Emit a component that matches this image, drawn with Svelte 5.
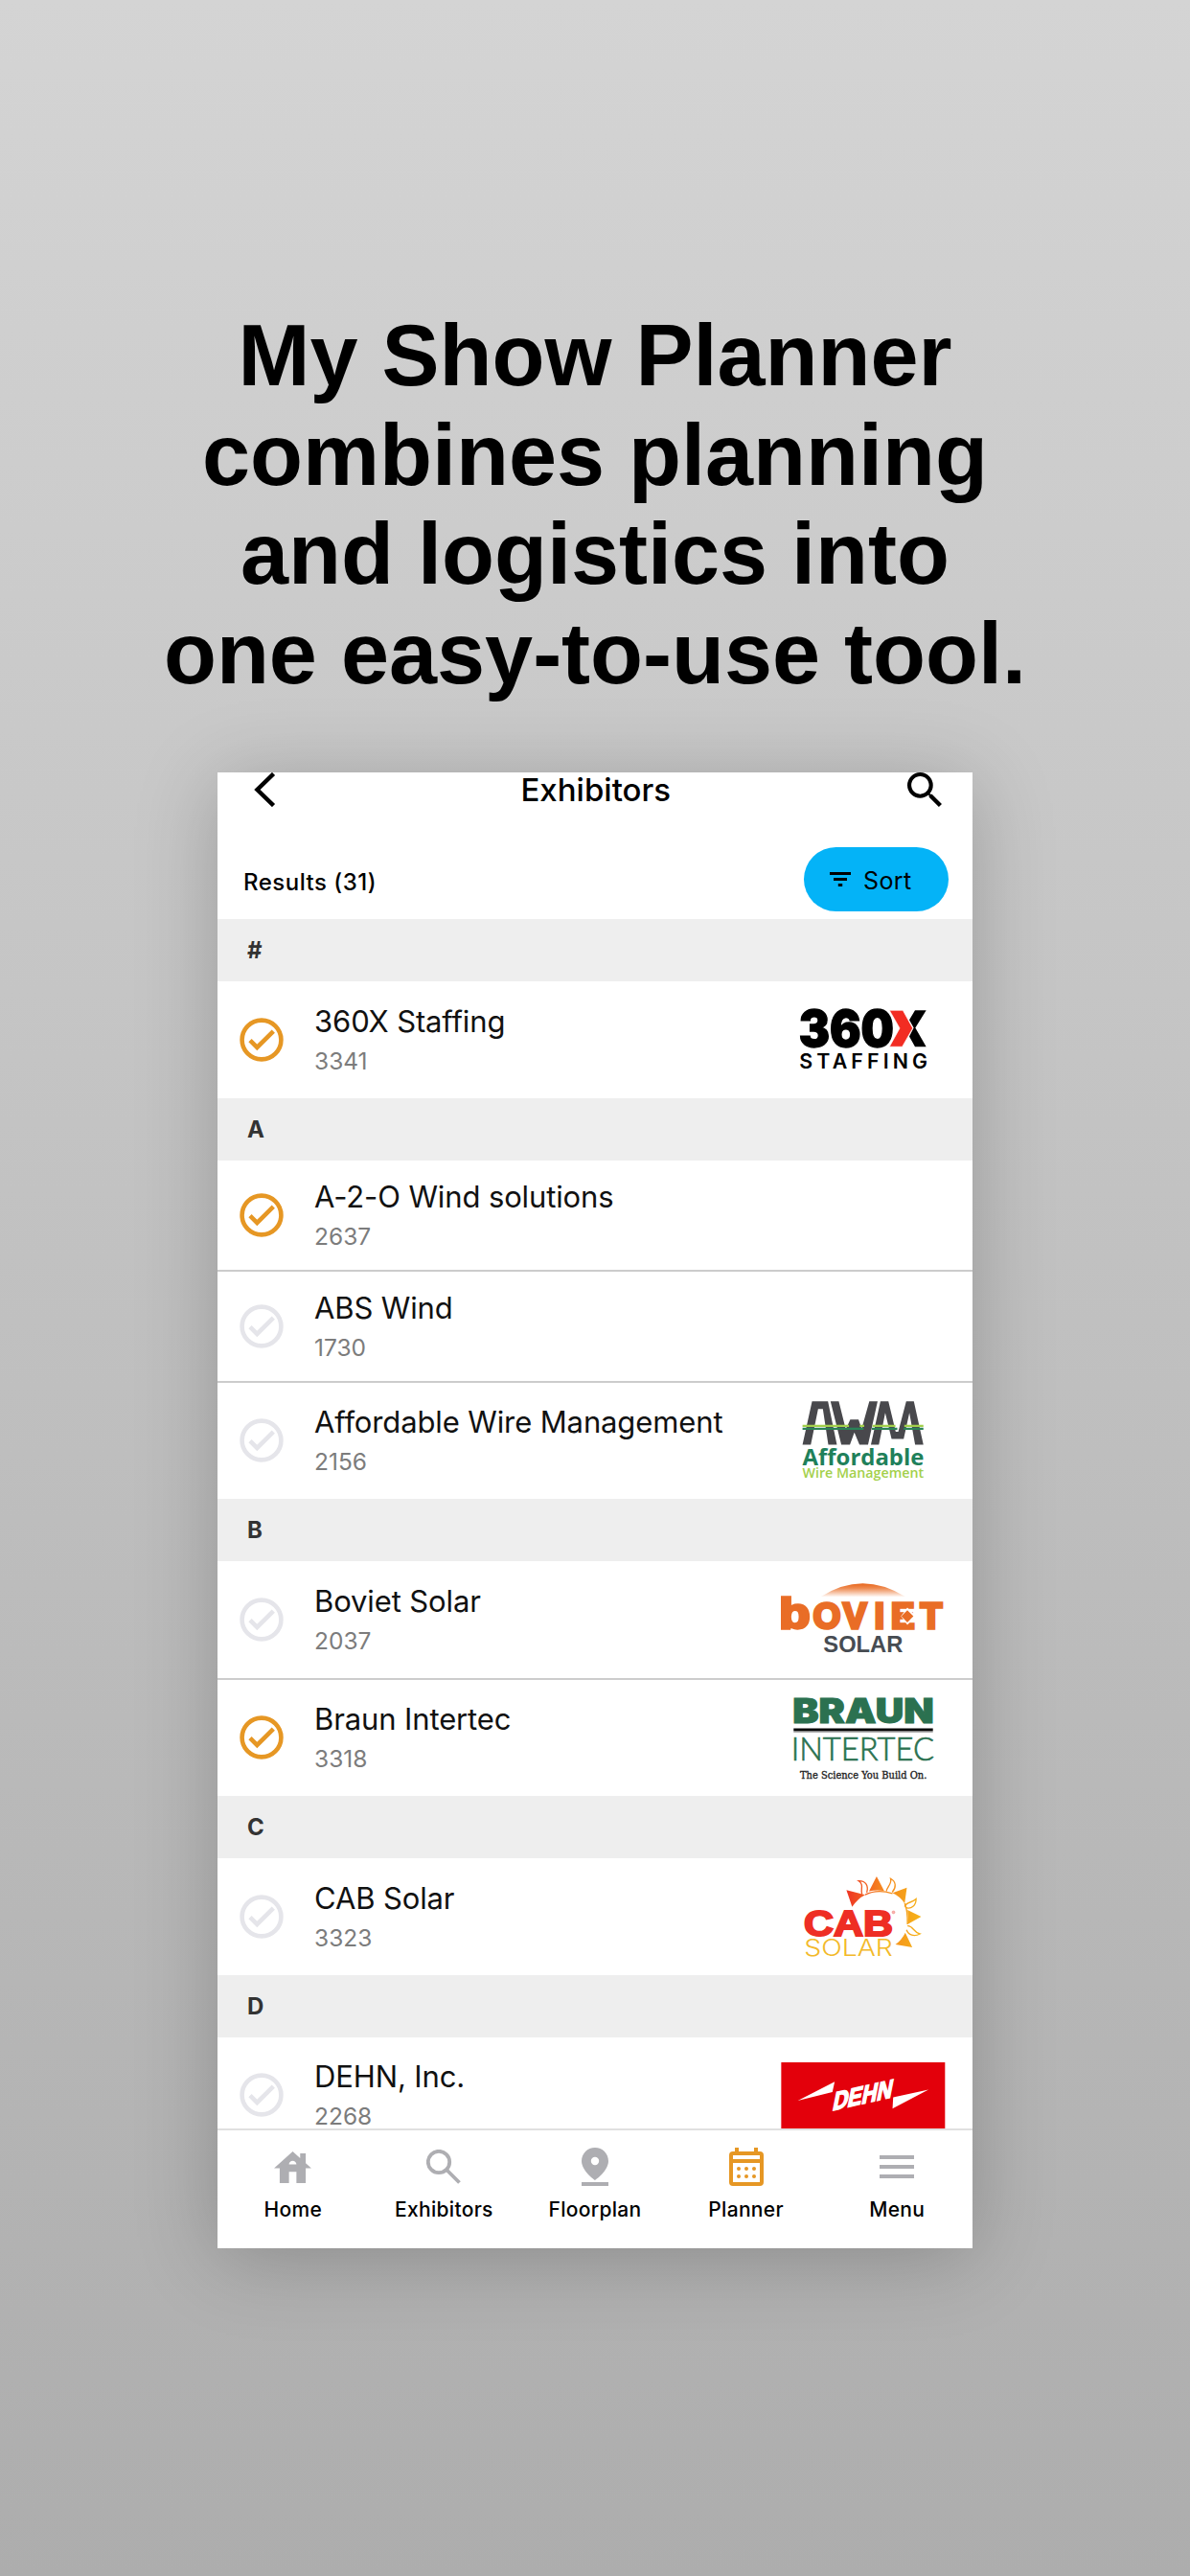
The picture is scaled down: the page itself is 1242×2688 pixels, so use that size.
<script lang="ts">
  type Exhibitor = {
    name: string;
    booth: string;
    planned?: boolean;
    logo?: string;
  };

  type Section = { letter: string; items: Exhibitor[] };

  const sections: Section[] = [
    {
      letter: '#',
      items: [{ name: '360X Staffing', booth: '3341', planned: true, logo: '360x' }]
    },
    {
      letter: 'A',
      items: [
        { name: 'A-2-O Wind solutions', booth: '2637', planned: true },
        { name: 'ABS Wind', booth: '1730' },
        { name: 'Affordable Wire Management', booth: '2156', logo: 'awm' }
      ]
    },
    {
      letter: 'B',
      items: [
        { name: 'Boviet Solar', booth: '2037', logo: 'boviet' },
        { name: 'Braun Intertec', booth: '3318', planned: true, logo: 'braun' }
      ]
    },
    { letter: 'C', items: [{ name: 'CAB Solar', booth: '3323', logo: 'cab' }] },
    { letter: 'D', items: [{ name: 'DEHN, Inc.', booth: '2268', logo: 'dehn' }] }
  ];

  const tabs = ['Home', 'Exhibitors', 'Floorplan', 'Planner', 'Menu'];
  let activeTab = $state('Planner');
</script>

{#snippet logoArt(logo: string)}
  {#if logo === '360x'}
    <svg class="logo" viewBox="45 12 516 363">
      <text class="inter" x="101" y="215" font-size="155" font-weight="900" stroke="#000" stroke-width="4" textLength="298" lengthAdjust="spacingAndGlyphs">360</text>
      <path d="M385 102h42l31 56-33 58h-40l32-58z" fill="#f22c22" stroke="#fff" stroke-width="2" />
      <path d="M465 102h35l-34 55 34 59h-35l-18-32 14-27-14-25z" />
      <text class="inter" x="103" y="285" font-size="64" font-weight="600" textLength="401">STAFFING</text>
    </svg>
  {:else if logo === 'awm'}
    <svg class="logo" viewBox="45 36 516 366">
      <g fill="#48484c">
        <path d="M112 230L142 94h50l28 136h-27L176 118h-15l-23 112z" />
        <path d="M200 94h26l22 88 14-31h26l10 29 24-86h26l-30 136h-27l-16-38-14 38h-27z" />
        <path d="M327 230l30-136h25l23 96h8l25-96h24l30 136h-26l-18-100-18 82h-38l-20-82-20 100z" />
      </g>
      <path d="M112 171h146M292 171h14M332 171h72M432 171h60" stroke="#a3d04b" stroke-width="7" />
      <path d="M112 180h192M330 180h80M430 180h62" stroke="#2a8258" stroke-width="7" />
      <text class="open" x="112" y="294" font-size="72" font-weight="700" fill="#20805a" textLength="382" lengthAdjust="spacingAndGlyphs">Affordable</text>
      <text class="open" x="112" y="335" font-size="43" font-weight="600" fill="#a3d04b" textLength="381" lengthAdjust="spacingAndGlyphs">Wire Management</text>
    </svg>
  {:else if logo === 'boviet'}
    <svg class="logo" viewBox="45 -3 516 363">
      <defs>
        <linearGradient id="dawn" x1="0" y1="0" x2="0" y2="1">
          <stop offset="0" stop-color="#e8651b" />
          <stop offset=".35" stop-color="#ee8a50" />
          <stop offset="1" stop-color="#fff" />
        </linearGradient>
      </defs>
      <path d="M168 109Q300 23 437 109z" fill="url(#dawn)" />
      <g class="arial" fill="#e96d26" stroke="#e96d26" stroke-width="10" font-weight="700">
        <text x="39" y="207" font-size="134" textLength="97" lengthAdjust="spacingAndGlyphs">b</text>
        <text x="146 240 338 390 482" y="207" font-size="110">OVIET</text>
      </g>
      <path d="M441 142l27 27-27 27-20-27z" fill="#fff" />
      <path d="M441 150l19 19-19 19-19-19z" fill="#e96d26" />
      <text class="arial" x="178" y="280" font-size="72" font-weight="700" fill="#474c52" textLength="249" lengthAdjust="spacingAndGlyphs">SOLAR</text>
    </svg>
  {:else if logo === 'braun'}
    <svg class="logo" viewBox="45 6 516 366">
      <text class="inter" x="81" y="142" font-size="105" font-weight="900" fill="#2b7150" stroke="#2b7150" stroke-width="3" textLength="444" lengthAdjust="spacingAndGlyphs">BRAUN</text>
      <path d="M84 163h438" stroke="#050505" stroke-width="9" />
      <path d="M84 170h438" stroke="#aaa" stroke-width="3" />
      <text class="lato" x="76" y="259" font-size="103" font-weight="300" fill="#2b7150" stroke="#2b7150" stroke-width="2" textLength="450" lengthAdjust="spacingAndGlyphs">INTERTEC</text>
      <text class="slab" x="104" y="315" font-size="31" fill="#222" stroke="#222" textLength="399" lengthAdjust="spacingAndGlyphs">The Science You Build On.</text>
    </svg>
  {:else if logo === 'cab'}
    <svg class="logo" viewBox="45 27 516 366">
      <defs>
        <linearGradient id="rays" gradientUnits="userSpaceOnUse" x1="250" y1="0" x2="485" y2="0">
          <stop offset="0" stop-color="#ee3424" />
          <stop offset=".45" stop-color="#f58220" />
          <stop offset="1" stop-color="#f6b417" />
        </linearGradient>
      </defs>
      <g fill="url(#rays)">
        <path d="M250 127l59 15q-24 12-41 38z" />
        <path d="M345 84l24 46q-24-5-48 1z" />
        <path d="M440 120l-7 49q-14-22-38-33z" />
        <path d="M485 211l-43 24q4-22 0-45z" />
        <path d="M457 307l-53-9q20-14 31-37z" />
      </g>
      <g class="flames">
        <path d="M299 141c-6-16 8-30-11-43 24-1 32 17 26 37" />
        <path d="M376 131c0-14 18-22 13-40 18 10 18 28 5 43" />
        <path d="M433 179c6-16 22-10 36-24 0 20-14 34-34 27" />
        <path d="M442 240c16-3 18 20 39 25-18 10-36 4-42-13" />
        <path d="M309 142q37-19 86-4M433 169q10 22 9 66" />
      </g>
      <text class="arial" x="116" y="271" font-size="110" font-weight="700" fill="#ee2e24" stroke="#ee2e24" stroke-width="6" textLength="280" lengthAdjust="spacingAndGlyphs">CAB</text>
      <circle cx="398" cy="197" r="4.5" fill="#f8b4b0" stroke="#ee5a50" />
      <text class="inter" x="117" y="334" font-size="71" font-weight="300" fill="#f3b929" textLength="279" lengthAdjust="spacingAndGlyphs">SOLAR</text>
    </svg>
  {:else}
    <svg class="logo" viewBox="75 -12 516 366">
      <path d="M75 66h515v210H75z" fill="#e3000b" />
      <path d="M127 187l116-60-7 33zM427 176l111-24-113 60z" fill="#fff" />
      <text class="arial" transform="matrix(1 -.225 -.2 1 234 218)" font-size="82" font-weight="700" fill="#fff" stroke="#fff" stroke-width="5" textLength="186" lengthAdjust="spacingAndGlyphs">DEHN</text>
    </svg>
  {/if}
{/snippet}

<div class="stage">
  <h1>My Show Planner<br />combines planning<br />and logistics into<br />one easy-to-use tool.</h1>

  <div class="phone">
    <header>
      <svg class="back" viewBox="0 0 36 36">
        <path d="M21.5 1.5L4.5 18l17 16.5" />
      </svg>
      <span class="title">Exhibitors</span>
      <svg viewBox="3 3 17.5 17.5" width="36" height="36">
        <path d="M15.5 14h-.79l-.28-.27A6.471 6.471 0 0 0 16 9.5 6.5 6.5 0 1 0 9.5 16c1.61 0 3.09-.59 4.23-1.57l.27.28v.79l5 4.99L20.49 19l-4.99-5zm-6 0C7.01 14 5 11.99 5 9.5S7.01 5 9.5 5 14 7.01 14 9.5 11.99 14 9.5 14z" />
      </svg>
    </header>

    <div class="toolbar">
      <span class="results">Results (31)</span>
      <button class="sort">
        <svg viewBox="0 0 22 15"><path d="M0 1.5h22M4 7.5h14M8.8 13.5h4.4" /></svg>
        <span>Sort</span>
      </button>
    </div>

    <main>
      {#each sections as section (section.letter)}
        <div class="letter">{section.letter}</div>
        <ul>
          {#each section.items as item (item.booth)}
            <li class:with-logo={item.logo}>
              <svg class="check" class:planned={item.planned} viewBox="-23 -23 46 46">
                <circle r="20.4" />
                <path d="M-12 .7l7.3 7.3L12.3-8.9" />
              </svg>
              <div class="info">
                <div class="name">{item.name}</div>
                <div class="booth">{item.booth}</div>
              </div>
              {#if item.logo}
                {@render logoArt(item.logo)}
              {/if}
            </li>
          {/each}
        </ul>
      {/each}
    </main>

    <nav>
      {#each tabs as tab (tab)}
        <button class="tab" class:active={tab === activeTab} onclick={() => (activeTab = tab)}>
          <span class="tab-icon">
            {#if tab === 'Home'}
              <svg viewBox="2 3 20 17" width="39" height="33">
                <path d="M19 9.3V4h-3v2.6L12 3 2 12h3v8h5v-6h4v6h5v-8h3l-3-2.7zm-9 .7c0-1.1.9-2 2-2s2 .9 2 2h-4z" />
              </svg>
            {:else if tab === 'Exhibitors'}
              <svg class="outline" viewBox="0 0 36 36" width="36" height="36">
                <circle cx="13" cy="13" r="11.2" />
                <path d="M21 21l13.5 13.5" />
              </svg>
            {:else if tab === 'Floorplan'}
              <svg viewBox="0 0 28 40" width="28" height="40">
                <path fill-rule="evenodd" d="M14 0C6.2 0 0 6.2 0 14c0 10.5 14 20 14 20s14-9.5 14-20C28 6.2 21.8 0 14 0zm0 9.8a4.2 4.2 0 1 1 0 8.4 4.2 4.2 0 0 1 0-8.4zM0 36h28v4H0z" />
              </svg>
            {:else if tab === 'Planner'}
              <svg viewBox="0 0 36 40" width="36" height="40">
                <path fill-rule="evenodd" d="M6 0h4v4h16V0h4v4h2a4 4 0 0 1 4 4v28a4 4 0 0 1-4 4H4a4 4 0 0 1-4-4V8a4 4 0 0 1 4-4h2zM4 8v4h28V8zM4 16v20h28V16z" />
                {#each [10, 18, 26] as cx}
                  <circle {cx} cy="22" r="2" />
                  <circle {cx} cy="30" r="2" />
                {/each}
              </svg>
            {:else}
              <svg viewBox="0 0 36 24" width="36" height="24">
                <path d="M0 0h36v4H0zM0 10h36v4H0zM0 20h36v4H0z" />
              </svg>
            {/if}
          </span>
          <span class="tab-label">{tab}</span>
        </button>
      {/each}
    </nav>
  </div>
</div>

<style>
  :global(body) { margin: 0; }
  .stage {
    box-sizing: border-box;
    height: 2688px;
    padding-top: 320px;
    overflow: hidden;
    display: flex;
    flex-direction: column;
    align-items: center;
    background: linear-gradient(#d4d4d4, #adadad);
    font-family: Inter, "Liberation Sans", sans-serif;
    color: #000;
  }
  h1 {
    margin: 0 0 72px;
    font: 700 90px/103.5px "Liberation Sans", Arial, sans-serif;
    text-align: center;
    white-space: nowrap;
  }
  .phone {
    width: 788px;
    height: 1540px;
    display: flex;
    flex-direction: column;
    background: #fff;
    box-shadow: 0 10px 80px rgba(0, 0, 0, 0.22);
  }
  svg { display: block; flex: none; }
  button {
    border: 0;
    padding: 0;
    background: none;
    font-family: inherit;
    color: inherit;
  }

  header {
    height: 36px;
    padding: 0 31.5px 0 37px;
    display: flex;
    justify-content: space-between;
    align-items: center;
  }
  .back { width: 36px; height: 36px; fill: none; stroke: #000; stroke-width: 4.5; }
  .title { margin-right: 4px; font-size: 33px; line-height: 36px; font-weight: 500; }

  .toolbar {
    height: 117px;
    box-sizing: border-box;
    padding: 42px 25px 0 27px;
    display: flex;
    justify-content: space-between;
    align-items: flex-start;
  }
  .results {
    margin-top: 22px;
    font-size: 24px;
    line-height: 30px;
    font-weight: 500;
    letter-spacing: 0.5px;
  }
  .sort {
    width: 151px;
    height: 67px;
    padding-left: 27px;
    display: flex;
    align-items: center;
    gap: 13px;
    border-radius: 34px;
    background: #04b3f7;
    font-size: 25px;
    letter-spacing: 0.4px;
  }
  .sort span { padding-top: 2px; }
  .sort svg { width: 22px; height: 15px; stroke: #000; stroke-width: 2.8; }

  main { flex: 1; min-height: 0; overflow: hidden; }
  .letter {
    height: 65px;
    padding-left: 31px;
    background: #eee;
    font-size: 24px;
    line-height: 65px;
    font-weight: 700;
    color: #333;
  }
  ul { margin: 0; padding: 0; list-style: none; }
  li {
    height: 114px;
    padding: 0 28px 0 23px;
    display: flex;
    align-items: center;
  }
  li.with-logo { height: 121.5px; }
  li + li { border-top: 2px solid #ccc; }
  .check { width: 46px; height: 46px; fill: none; stroke: #e5e5ea; stroke-width: 4.6; }
  .check.planned { stroke: #e69724; }
  .info { flex: 1; margin-left: 32px; padding-top: 3px; }
  .name {
    font-size: 31px;
    line-height: 42px;
    letter-spacing: -0.12px;
    color: #111;
    white-space: nowrap;
  }
  .booth { font-size: 24.5px; line-height: 41px; color: #7c7c7c; }
  .logo { width: 172px; height: 100%; }
  .inter { font-family: Inter, sans-serif; }
  .arial { font-family: "Liberation Sans", Arial, sans-serif; }
  .open { font-family: "Open Sans", sans-serif; }
  .lato { font-family: Lato, sans-serif; }
  .slab { font-family: "DejaVu Serif", serif; }
  .flames { fill: none; stroke: url(#rays); stroke-width: 4; }

  nav {
    height: 125px;
    box-sizing: border-box;
    border-top: 2px solid #e0e0e0;
    display: grid;
    grid-template-columns: repeat(5, 1fr);
    align-items: start;
  }
  .tab { display: flex; flex-direction: column; align-items: center; padding-top: 18px; }
  .tab-icon { height: 40px; display: flex; align-items: center; fill: #aeaeb2; }
  .tab.active .tab-icon { fill: #e69724; }
  .outline { fill: none; stroke: #aeaeb2; stroke-width: 3.8; }
  .tab-label {
    margin-top: 11px;
    font-size: 21px;
    line-height: 28px;
    font-weight: 500;
    letter-spacing: 0.3px;
  }
</style>
